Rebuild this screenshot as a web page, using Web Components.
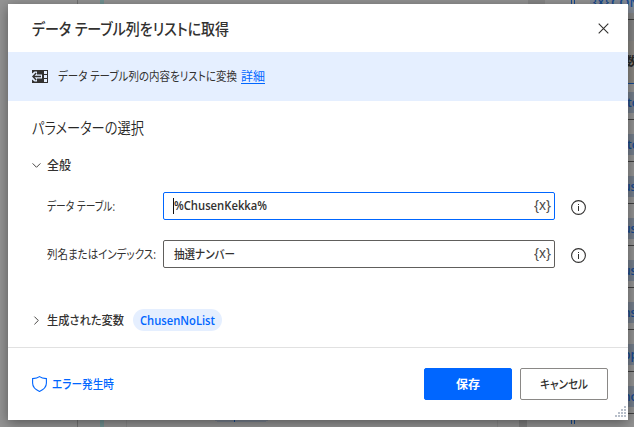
<!DOCTYPE html>
<html lang="ja">
<head>
<meta charset="utf-8">
<title>データ テーブル列をリストに取得</title>
<style>
html,body{margin:0;height:100%;overflow:hidden;background:#8d8d8d}
body{font:12px/16px "Open Sans","Noto Sans CJK JP",sans-serif;color:#323130}
</style>
</head>
<body>
<flow-designer><action-dialog></action-dialog></flow-designer>
<script>
const define = (name, html, setup) => customElements.define(name, class extends HTMLElement {
  connectedCallback() {
    if (this.shadowRoot) return;
    const t = document.createElement('template');
    t.innerHTML = html;
    this.attachShadow({mode: 'open'}).append(t.content.cloneNode(true));
    if (setup) setup(this, this.shadowRoot);
  }
});

// Label with a fixed measure: the glyph run is condensed to the given width.
define('fit-label', `<style>
:host{display:block;flex:none;white-space:nowrap}
span{display:inline-block;transform-origin:0 50%;font-feature-settings:"palt";white-space:nowrap}
</style><span><slot></slot></span>`, (el, root) => {
  const span = root.querySelector('span'), w = +el.getAttribute('w');
  el.style.width = w + 'px';
  span.style.transform = `scaleX(${w / span.getBoundingClientRect().width})`;
});

define('flow-backdrop', `<style>:host{display:block;width:634px;height:427px}svg{display:block}
text{font-family:"Open Sans","Noto Sans CJK JP",sans-serif;font-size:12px;font-weight:600;fill:#164a91}</style>
<svg width="634" height="427" shape-rendering="crispEdges">
<rect width="634" height="427" fill="#949494"/>
<path d="M77.5 0V427" stroke="#747474"/><rect x="100" width="4" height="427" fill="#739494"/>
<path d="M126.5 405V427" stroke="#8a8a8a"/>
<rect x="528" width="17" height="10" fill="#878787"/>
<path d="M497.5 405V427" stroke="#8a8a8a"/>
<rect x="519" y="405" width="8" height="22" fill="#808080"/>
<rect x="209" y="398" width="65" height="24" rx="11" fill="#7c8593"/><rect x="234" y="418" width="1" height="4" fill="#164a91"/>
<path d="M571.5 0V4M574.5 0V4M571.5 420V424M574.5 420V424" stroke="#164a91"/>
<rect x="590" y="0" width="44" height="13" fill="#838b97"/>
<rect x="628" y="13" width="6" height="28" fill="#858585"/><path d="M628 19.5H634" stroke="#3f3f3f"/>
<rect x="628" y="41" width="6" height="42" fill="#8b8883"/><path d="M628 83.5H634" stroke="#164a91"/>
<g id="rows"></g>
</svg>`, (el, root) => {
  const words = ['to','to','us','us','us','ns','pp','no'];
  let s = '<g shape-rendering="auto"><text x="593" y="6">{x}</text><text x="611" y="7" style="font-size:13px">CON</text><text x="625" y="66" style="fill:#292929">数</text></g>';
  words.forEach((w, i) => {
    const y = 92 + i * 42;
    s += `<rect x="628" y="${y}" width="6" height="21" fill="#757f8d"/><path d="M628 ${y + 27.5}H634" stroke="#414141"/><text x="${i < 2 ? 627 : 623}" y="${y + 15}">${w}</text>`;
  });
  root.querySelector('#rows').innerHTML = s;
});

define('flow-designer', `<style>
:host{display:grid;width:634px;height:427px}
flow-backdrop,.stage{grid-area:1/1}
.stage{padding:4px 0 0 8px;z-index:1}
</style><flow-backdrop></flow-backdrop><div class="stage"><slot></slot></div>`);

define('info-icon', `<style>:host{display:block;flex:none;width:15px;height:15px}svg{display:block}</style>
<svg width="15" height="15" fill="none" stroke="#323130"><circle cx="7.5" cy="7.5" r="6.9" stroke-width="1.1"/><path d="M7.5 6V11M7.5 4V5"/></svg>`);

define('chevron-icon', `<style>:host{display:block;flex:none;width:9px;height:9px}:host([right]) svg{transform:rotate(-90deg)}svg{display:block}</style>
<svg width="9" height="9" fill="none" stroke="#484644"><path d="M.6 2.4 4.5 6.3 8.4 2.4"/></svg>`);

define('text-field', `<style>
:host{display:flex;box-sizing:border-box;width:392px;height:28px;border:1px solid #605e5c;border-radius:2px;align-items:center;justify-content:space-between;padding:0 3px 0 10px;background:#fff}
:host([focused]){border-color:#0066ff}
:host([focused]) .value{box-shadow:-1px 0 #111}
.value{display:block;height:16px;line-height:16px;font-weight:600}
.var{font:14px/16px "Noto Sans",sans-serif;color:#484644;padding-bottom:2px}
</style><span class="value"><slot></slot></span><fit-label class="var" w="17">{x}</fit-label>`);

define('param-row', `<style>
:host{display:flex;height:28px;align-items:center}
.label{width:116px;flex:none;padding-top:2px}
info-icon{margin:3px 0 0 16px}
</style><div class="label"><slot name="label"></slot></div><slot></slot><info-icon></info-icon>`);

define('dialog-button', `<style>
:host{display:flex;box-sizing:border-box;width:88px;height:32px;align-items:center;justify-content:center;border:1px solid #8a8886;border-radius:2px;font-weight:600;background:#fff;padding-top:2px}
:host([primary]){background:#0066ff;border-color:#0066ff;color:#fff}
</style><slot></slot>`);

define('variable-chip', `<style>
:host{display:flex;width:89px;height:22px;border-radius:11px;background:#e5efff;color:#0066ff;align-items:center;justify-content:center;font-weight:600}
fit-label,::slotted(*){padding-top:1px}
</style><slot></slot>`);

define('size-grip', `<style>:host{display:block;position:absolute;right:1px;bottom:2px}svg{display:block}</style>
<svg width="12" height="12" fill="#b8bfca" shape-rendering="crispEdges"><path d="M9 0h2v2h-2zM6 3h2v2h-2zM9 3h2v2h-2zM3 6h2v2h-2zM6 6h2v2h-2zM9 6h2v2h-2zM0 9h2v2h-2zM3 9h2v2h-2zM6 9h2v2h-2zM9 9h2v2h-2z"/></svg>`);

define('action-dialog', `<style>
:host{display:flex;flex-direction:column;position:relative;box-sizing:border-box;width:620px;height:416px;background:#fff;box-shadow:0 3px 12px rgba(0,0,0,.42)}
header{height:48px;box-sizing:border-box;display:flex;align-items:center;justify-content:space-between;padding:0 19px 0 24px;font-size:16px;line-height:20px;font-weight:500}
header fit-label{padding-top:2px}
.banner{height:49px;flex:none;background:#e5efff;display:flex;align-items:center;padding-left:24px}
.banner svg{margin-right:10px}
.banner fit-label{padding-top:1px}
a{color:#0066ff;text-decoration:underline;text-underline-offset:2px}
main{flex:1;padding:17px 0 0 24px}
h2{margin:0;font-size:16px;line-height:20px;font-weight:350;color:#282726}
.group{display:flex;align-items:center;font-weight:500;gap:6px}
.group>fit-label{padding-top:2px}
.general{margin-top:19px;height:16px}
.rows{display:grid;gap:20px;padding-left:15px;margin-top:19px}
.output{height:22px;margin-top:41px}
.output variable-chip{margin-left:3px}
footer{height:73px;box-sizing:border-box;border-top:1px solid #e1e1e1;display:flex;align-items:center;justify-content:space-between;padding:0 20px 0 24px}
.error{display:flex;align-items:center;gap:5px;color:#0066ff;font-weight:500}
.error fit-label{padding-top:2px}
.buttons{display:flex;gap:8px}
</style>
<header><fit-label w="197">データ テーブル列をリストに取得</fit-label>
<svg width="11" height="11" fill="none" stroke="#323130" stroke-width="1.1" style="margin-top:1px"><path d="M.7.7 10.3 10.3M10.3.7.7 10.3"/></svg></header>
<div class="banner"><svg width="16" height="13"><path fill="#323130" d="M0 0H16V13H0Z"/><path fill="#e5efff" d="M12 1H15V4H12ZM12 5H15V8H12ZM12 9H15V12H12ZM0 3.5 2.6 1.6H5V4.4H10V8.6H5V11.4H2.6L0 9.5Z"/><path d="M4.2 3 .9 6.5 4.2 10M1 6.5H9" fill="none" stroke="#323130" stroke-width="1.3"/></svg>
<fit-label w="179">データ テーブル列の内容をリストに変換</fit-label><fit-label w="24" style="margin-left:4px"><a>詳細</a></fit-label></div>
<main>
<h2><fit-label w="112">パラメーターの選択</fit-label></h2>
<div class="group general"><chevron-icon></chevron-icon><fit-label w="24">全般</fit-label></div>
<div class="rows">
<param-row><fit-label slot="label" w="68">データ テーブル:</fit-label><text-field focused><fit-label w="93">%ChusenKekka%</fit-label></text-field></param-row>
<param-row><fit-label slot="label" w="109">列名またはインデックス:</fit-label><text-field><fit-label w="61" style="font-weight:500;padding-top:1px">抽選ナンバー</fit-label></text-field></param-row>
</div>
<div class="group output"><chevron-icon right></chevron-icon><fit-label w="77">生成された変数</fit-label><variable-chip><fit-label w="75">ChusenNoList</fit-label></variable-chip></div>
</main>
<footer><div class="error"><svg width="15" height="16" fill="none" stroke="#0066ff" stroke-width="1.1"><path d="M7.5.6C5.7 2 3 2.5.6 2.6V7C.6 11 3.5 13.7 7.5 15.4 11.5 13.7 14.4 11 14.4 7V2.6C12 2.5 9.3 2 7.5.6Z"/></svg><fit-label w="62">エラー発生時</fit-label></div>
<div class="buttons"><dialog-button primary><fit-label w="24">保存</fit-label></dialog-button><dialog-button><fit-label w="48" style="font-weight:500">キャンセル</fit-label></dialog-button></div></footer>
<size-grip></size-grip>`);
</script>
</body>
</html>
